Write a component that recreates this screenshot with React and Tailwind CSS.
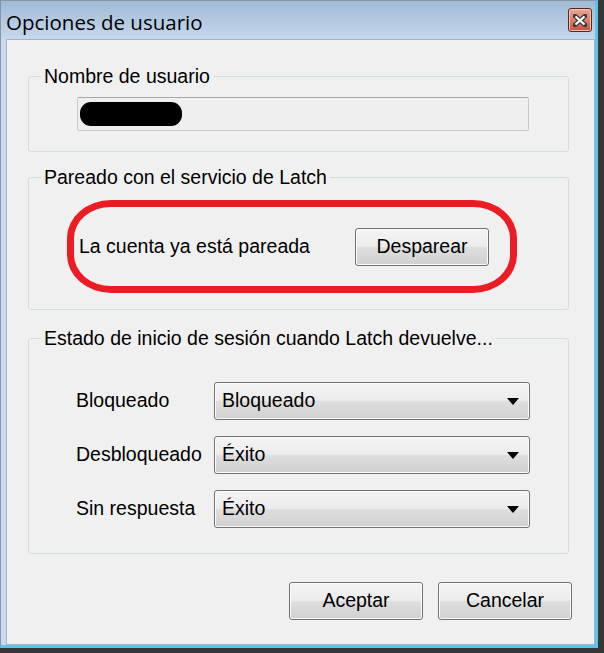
import React from "react";

const btnFace =
  "border border-[#707070] rounded-[3px] shadow-[inset_0_0_0_1px_#fbfbfb] bg-[linear-gradient(to_bottom,#f4f4f4_0%,#ececec_48%,#dedede_52%,#d0d0d0_100%)]";

function Group({ title, className = "", children }) {
  return (
    <fieldset className={`ml-[21px] w-[541px] rounded-[3px] border border-[#d2dce3] ${className}`}>
      <legend className="ml-[12px] px-[3px] text-[19.5px] leading-[22px] text-black">{title}</legend>
      {children}
    </fieldset>
  );
}

function Combo({ value }) {
  return (
    <div className={`flex h-[38px] w-[316px] items-center justify-between pl-[7px] pr-[10px] ${btnFace}`}>
      <span className="text-[19.5px] text-black">{value}</span>
      <svg width="12" height="7" viewBox="0 0 12 7">
        <path d="M0 0 H12 L6 7 Z" fill="#000" />
      </svg>
    </div>
  );
}

function Button({ children, className = "" }) {
  return (
    <button className={`flex h-[38px] w-[134px] items-center justify-center text-[19.5px] text-black ${btnFace} ${className}`}>
      {children}
    </button>
  );
}

export default function App() {
  const rows = [
    { label: "Bloqueado", value: "Bloqueado" },
    { label: "Desbloqueado", value: "Éxito" },
    { label: "Sin respuesta", value: "Éxito" },
  ];

  return (
    <div className="h-[653px] w-[604px] overflow-hidden bg-[#363636] font-['Liberation_Sans',Arial,sans-serif]">
      <div className="flex h-[648px] w-[598px] flex-col border-t border-l border-[#8795a6] border-r-[3px] border-b-[3px] border-r-[#5ec3ec] border-b-[#5ec3ec] bg-[#c7daee]">
        {/* Title bar */}
        <div className="flex h-[38px] items-center justify-between bg-gradient-to-b from-[#a1bad5] to-[#c5d8ec] pl-[5px] pr-[3px] pt-[4px]">
          <span className="font-['Open_Sans',sans-serif] text-[20.5px] leading-none text-black">Opciones de usuario</span>
          <div className="mb-[4px] flex h-[24px] w-[24px] items-center justify-center rounded-[3px] border border-[#5a2219] bg-gradient-to-b from-[#eaa898] to-[#c4533e] shadow-[inset_0_0_0_1px_#f3c6bb]">
            <svg width="14" height="13" viewBox="0 0 14 13">
              <path d="M2 2 L12 11 M12 2 L2 11" stroke="#3d3d3d" strokeWidth="4.5" strokeLinecap="square" />
              <path d="M2.5 2.5 L11.5 10.5 M11.5 2.5 L2.5 10.5" stroke="#fff" strokeWidth="2.2" />
            </svg>
          </div>
        </div>

        {/* Client area */}
        <div className="ml-[5px] flex-1 border border-[#a3b4c6] bg-[#f0f0f0] pt-[25px]">
          <Group title="Nombre de usuario" className="pb-[20px]">
            <div className="ml-[48px] mt-[10px] flex h-[34px] w-[452px] items-center rounded-[2px] border border-[#c9c9c9] border-t-[#a8a8a8] bg-[#efefef] pl-[2px]">
              <div className="h-[24px] w-[102px] rounded-[11px] bg-black" />
            </div>
          </Group>

          <Group title="Pareado con el servicio de Latch" className="mt-[14px] pb-[44px]">
            <div className="relative mt-[41px] flex h-[36px] items-center pl-[50px]">
              <span className="w-[276px] text-[19.5px] text-black">La cuenta ya está pareada</span>
              <Button className="h-[37px]">Desparear</Button>
              {/* red annotation drawn over the dialog */}
              <div className="pointer-events-none absolute left-[38px] top-[-29px] h-[93px] w-[450px] rounded-[44px/38px] border-[7px] border-[#ec1c24]" />
            </div>
          </Group>

          <Group title="Estado de inicio de sesión cuando Latch devuelve..." className="mt-[17px] pb-[25px]">
            <div className="mt-[33px] flex flex-col gap-[16px] pl-[47px]">
              {rows.map((r) => (
                <div key={r.label} className="flex items-center">
                  <span className="w-[138px] text-[19.5px] text-black">{r.label}</span>
                  <Combo value={r.value} />
                </div>
              ))}
            </div>
          </Group>

          <div className="mt-[28px] flex justify-end gap-[15px] pr-[22px]">
            <Button>Aceptar</Button>
            <Button>Cancelar</Button>
          </div>
        </div>
      </div>
    </div>
  );
}
